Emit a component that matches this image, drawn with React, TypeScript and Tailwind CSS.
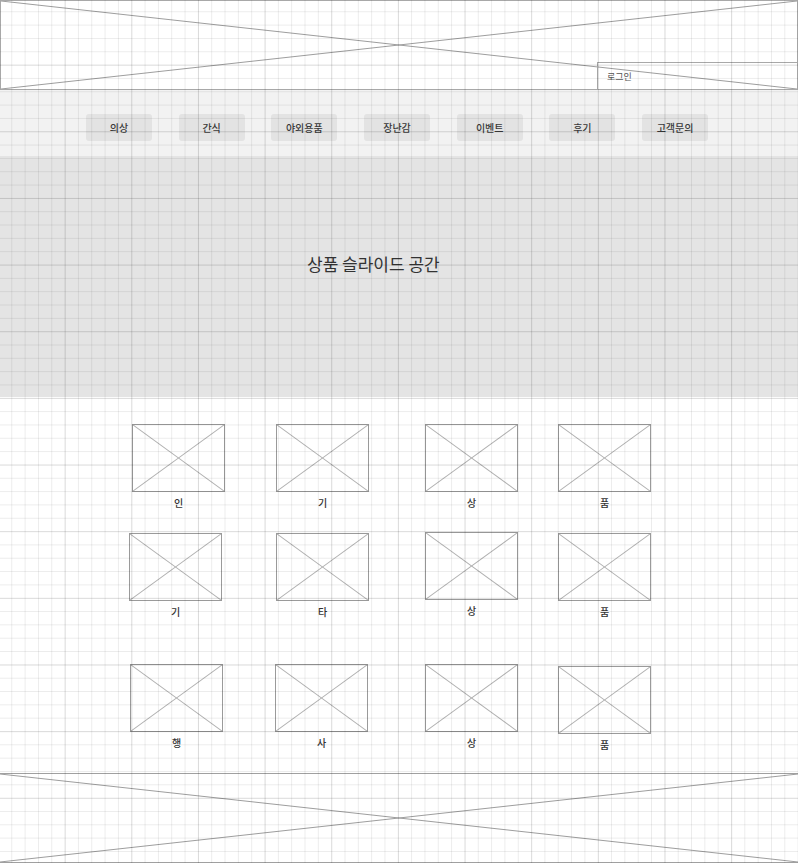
import React from "react";

function XLines({ color = "#a3a3a3" }: { color?: string }) {
  return (
    <svg
      className="absolute inset-0 h-full w-full pointer-events-none"
      viewBox="0 0 100 100"
      preserveAspectRatio="none"
    >
      <line x1="0" y1="0" x2="100" y2="100" stroke={color} strokeWidth="1" vectorEffect="non-scaling-stroke" />
      <line x1="0" y1="100" x2="100" y2="0" stroke={color} strokeWidth="1" vectorEffect="non-scaling-stroke" />
    </svg>
  );
}

const navItems = ["의상", "간식", "야외용품", "장난감", "이벤트", "후기", "고객문의"];

type Item = { label: string; cls: string };

const rows: { cls: string; items: Item[] }[] = [
  {
    cls: "mt-[27px]",
    items: [
      { label: "인", cls: "ml-[2px]" },
      { label: "기", cls: "" },
      { label: "상", cls: "" },
      { label: "품", cls: "" },
    ],
  },
  {
    cls: "mt-[24px]",
    items: [
      { label: "기", cls: "-ml-px" },
      { label: "타", cls: "" },
      { label: "상", cls: "-mt-px" },
      { label: "품", cls: "" },
    ],
  },
  {
    cls: "mt-[46px]",
    items: [
      { label: "행", cls: "" },
      { label: "사", cls: "-ml-px" },
      { label: "상", cls: "" },
      { label: "품", cls: "mt-[2px]" },
    ],
  },
];

export default function App() {
  return (
    <div className="relative h-[863px] w-full overflow-hidden bg-white font-['Noto_Sans_CJK_KR','Noto_Sans',sans-serif] text-[#333]">
      {/* Header */}
      <header className="relative flex h-[90px] items-end justify-end border border-[#a8a8a8]">
        <XLines color="#9e9e9e" />
        <div className="relative flex h-[27px] w-[200px] items-center border-l border-t border-[#a8a8a8] pl-[9px] text-[9px] leading-none text-[#555]">
          로그인
        </div>
      </header>

      {/* Nav */}
      <nav className="flex h-[66px] items-start justify-center gap-[26.7px] bg-[#f2f2f2] pr-[4px] pt-[24px]">
        {navItems.map((n) => (
          <div
            key={n}
            className="flex h-[27px] w-[66px] items-center justify-center rounded-[3px] bg-[#e3e3e3] text-[10px] font-medium text-[#3a3a3a]"
          >
            {n}
          </div>
        ))}
      </nav>

      {/* Slide */}
      <section className="h-[241px] bg-[#e4e4e4] pl-[307px] pt-[95px]">
        <div className="text-[17px] leading-[26px] text-[#333]">상품 슬라이드 공간</div>
      </section>

      {/* Products */}
      <main className="flex h-[376px] flex-col pl-[130px]">
        {rows.map((r, ri) => (
          <div key={ri} className={`grid grid-cols-[146px_149px_133px_93px] items-start ${r.cls}`}>
            {r.items.map((it, ii) => (
              <div key={ii} className={`flex w-[93px] flex-col items-center ${it.cls}`}>
                <div className="relative h-[68px] w-[93px] border border-[#9a9a9a]">
                  <XLines color="#b0b0b0" />
                </div>
                <div className="mt-[5px] text-[10px] font-medium leading-[12px] text-[#333]">{it.label}</div>
              </div>
            ))}
          </div>
        ))}
      </main>

      {/* Footer */}
      <footer className="relative h-[90px] border-b border-t border-[#a0a0a0]">
        <XLines color="#9e9e9e" />
      </footer>

      {/* Grid overlay */}
      <div className="pointer-events-none absolute inset-0 [background-image:linear-gradient(to_right,rgba(0,0,0,0.075)_1px,transparent_1px),linear-gradient(to_bottom,rgba(0,0,0,0.075)_1px,transparent_1px)] [background-position:11.3px_11.3px] [background-size:13.333px_13.333px]" />
      <div className="pointer-events-none absolute inset-0 [background-image:linear-gradient(to_right,rgba(0,0,0,0.08)_1px,transparent_1px),linear-gradient(to_bottom,rgba(0,0,0,0.08)_1px,transparent_1px)] [background-position:64.7px_64.7px] [background-size:66.667px_66.667px]" />
    </div>
  );
}
